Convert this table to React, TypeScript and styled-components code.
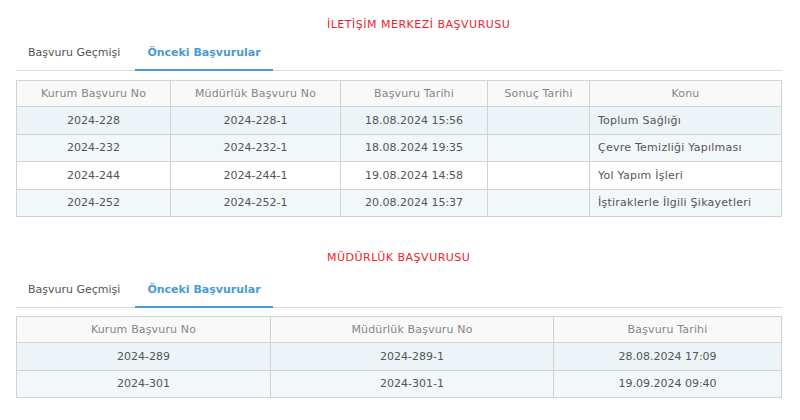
import * as React from "react";
import styled, { createGlobalStyle } from "styled-components";

const GlobalStyle = createGlobalStyle`
  html, body {
    margin: 0;
    padding: 0;
    background: #ffffff;
  }
  body {
    font-family: "DejaVu Sans", Verdana, sans-serif;
    font-size: 11px;
    color: #555555;
  }
`;

const Page = styled.div`
  padding: 17px 18px 0 16px;
`;

const Section = styled.section<{ $top: number }>`
  margin-top: ${p => p.$top}px;
`;

const SectionTitle = styled.div<{ $gap: number }>`
  color: #ee1c2e;
  line-height: 16px;
  padding-left: 311px;
  letter-spacing: 0.5px;
  margin-bottom: ${p => p.$gap}px;
`;

const TabBar = styled.div`
  display: flex;
  border-bottom: 1px solid #dcdcdc;
`;

const Tab = styled.div<{ $active?: boolean }>`
  padding: 8px 12px;
  line-height: 16px;
  margin-right: 3px;
  margin-bottom: -1px;
  border-bottom: 2px solid ${p => (p.$active ? "#4a9bd1" : "transparent")};
  color: ${p => (p.$active ? "#4a9bd1" : "#555555")};
  font-weight: ${p => (p.$active ? 700 : 400)};
  cursor: pointer;
`;

const Table = styled.table<{ $top: number }>`
  width: 100%;
  margin-top: ${p => p.$top}px;
  border-collapse: collapse;
  table-layout: fixed;
  border: 1px solid #d2d2d2;
`;

const HeadCell = styled.th`
  height: 25px;
  padding: 0 8px;
  background: #f9f9f9;
  color: #858585;
  font-weight: 400;
  letter-spacing: 0.15px;
  text-align: center;
  border: 1px solid #d2d2d2;
`;

const Row = styled.tr<{ $bg: string }>`
  height: 27.5px;
  background: ${p => p.$bg};
`;

const Cell = styled.td<{ $left?: boolean }>`
  padding: 0 8px;
  text-align: ${p => (p.$left ? "left" : "center")};
  letter-spacing: ${p => (p.$left ? "0.25px" : "0")};
  border: 1px solid #d2d2d2;
  color: #555555;
  white-space: nowrap;
`;

const rowBg = ["#edf4f8", "#f2f7fa", "#ffffff", "#f2f7fa"];

interface Column {
  title: string;
  width: number;
  left?: boolean;
}

interface TableProps {
  columns: Column[];
  rows: string[][];
  top: number;
}

const DataTable = ({ columns, rows, top }: TableProps) => (
  <Table $top={top}>
    <colgroup>
      {columns.map(c => (
        <col key={c.title} style={{ width: c.width }} />
      ))}
    </colgroup>
    <thead>
      <tr>
        {columns.map(c => (
          <HeadCell key={c.title}>{c.title}</HeadCell>
        ))}
      </tr>
    </thead>
    <tbody>
      {rows.map((r, i) => (
        <Row key={i} $bg={rowBg[i % rowBg.length]}>
          {r.map((v, j) => (
            <Cell key={j} $left={columns[j].left}>
              {v}
            </Cell>
          ))}
        </Row>
      ))}
    </tbody>
  </Table>
);

const Tabs = () => (
  <TabBar>
    <Tab>Başvuru Geçmişi</Tab>
    <Tab $active>Önceki Başvurular</Tab>
  </TabBar>
);

const merkezColumns: Column[] = [
  { title: "Kurum Başvuru No", width: 154 },
  { title: "Müdürlük Başvuru No", width: 170 },
  { title: "Başvuru Tarihi", width: 147 },
  { title: "Sonuç Tarihi", width: 102 },
  { title: "Konu", width: 192, left: true }
];

const merkezRows = [
  ["2024-228", "2024-228-1", "18.08.2024 15:56", "", "Toplum Sağlığı"],
  ["2024-232", "2024-232-1", "18.08.2024 19:35", "", "Çevre Temizliği Yapılması"],
  ["2024-244", "2024-244-1", "19.08.2024 14:58", "", "Yol Yapım İşleri"],
  ["2024-252", "2024-252-1", "20.08.2024 15:37", "", "İştiraklerle İlgili Şikayetleri"]
];

const mudurlukColumns: Column[] = [
  { title: "Kurum Başvuru No", width: 254 },
  { title: "Müdürlük Başvuru No", width: 283 },
  { title: "Başvuru Tarihi", width: 228 }
];

const mudurlukRows = [
  ["2024-289", "2024-289-1", "28.08.2024 17:09"],
  ["2024-301", "2024-301-1", "19.09.2024 09:40"]
];

export default function App() {
  return (
    <>
      <GlobalStyle />
      <Page>
        <Section $top={0}>
          <SectionTitle $gap={4}>İLETİŞİM MERKEZİ BAŞVURUSU</SectionTitle>
          <Tabs />
          <DataTable columns={merkezColumns} rows={merkezRows} top={9} />
        </Section>
        <Section $top={33}>
          <SectionTitle $gap={8}>MÜDÜRLÜK BAŞVURUSU</SectionTitle>
          <Tabs />
          <DataTable columns={mudurlukColumns} rows={mudurlukRows} top={8} />
        </Section>
      </Page>
    </>
  );
}
